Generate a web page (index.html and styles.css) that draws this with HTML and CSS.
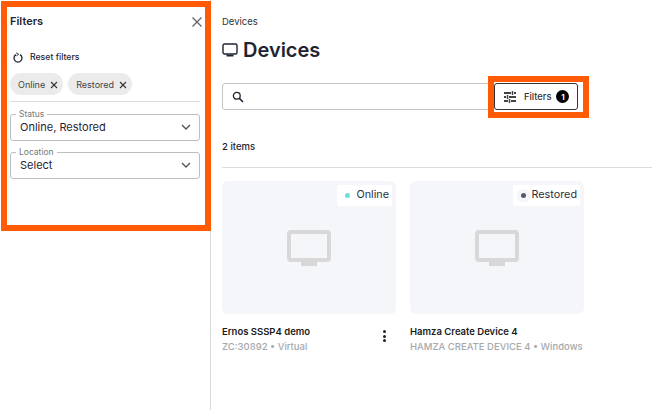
FILE: index.html
```html
<!DOCTYPE html>
<html lang="en">
<head>
  <meta charset="UTF-8">
  <meta name="viewport" content="width=device-width, initial-scale=1.0">
  <title>Devices</title>
  <link rel="stylesheet" href="styles.css">
</head>
<body>

  <div class="page">
    <aside class="sidebar">
      <div class="filters-panel">
        <div class="panel-head">
          <span class="panel-title">Filters</span>
          <svg class="panel-close" width="10" height="10" viewBox="0 0 10 10"><path d="M.5.5l9 9M9.500.5l-9 9" stroke="#5f6368" stroke-width="1.3" fill="none"/></svg>
        </div>
        <div class="reset-row">
          <svg width="10" height="11" viewBox="0 0 10 11"><path d="M3 2.600a4 4 0 1 0 4 0" stroke="#1f2430" stroke-width="1.3" fill="none"/><path d="M3.200.8l2.300 1.500-2 1.500" stroke="#1f2430" stroke-width="1" fill="none"/></svg>
          <span>Reset filters</span>
        </div>
        <div class="chips">
          <div class="chip">Online <svg class="chip-x" width="8" height="8" viewBox="0 0 8 8"><path d="M1 1l6 6M7 1L1 7" stroke="#333" stroke-width="1.1"/></svg></div>
          <div class="chip">Restored <svg class="chip-x" width="8" height="8" viewBox="0 0 8 8"><path d="M1 1l6 6M7 1L1 7" stroke="#333" stroke-width="1.1"/></svg></div>
        </div>
        <fieldset class="select-box">
          <legend>Status</legend>
          <span>Online, Restored</span>
          <svg width="10" height="6" viewBox="0 0 10 6"><path d="M1 1l4 4 4-4" stroke="#555" stroke-width="1.4" fill="none"/></svg>
        </fieldset>
        <fieldset class="select-box">
          <legend>Location</legend>
          <span>Select</span>
          <svg width="10" height="6" viewBox="0 0 10 6"><path d="M1 1l4 4 4-4" stroke="#555" stroke-width="1.4" fill="none"/></svg>
        </fieldset>
      </div>
    </aside>

    <main class="content">
      <div class="crumb">Devices</div>
      <h1 class="title">
        <svg width="16" height="14" viewBox="0 0 16 14"><rect x="1" y="1" width="14" height="10" rx="1.500" stroke="#1f2430" stroke-width="1.400" fill="none"/><path d="M4.500 12.600h7" stroke="#1f2430" stroke-width="1.800"/></svg>
        Devices
      </h1>

      <div class="toolbar">
        <div class="search">
          <svg width="12" height="12" viewBox="0 0 12 12"><circle cx="4.800" cy="4.800" r="3.400" stroke="#1f2430" stroke-width="1.300" fill="none"/><path d="M7.400 7.400l3.600 3.600" stroke="#1f2430" stroke-width="1.500"/></svg>
        </div>
        <div class="filter-mark">
          <button class="filter-btn">
            <svg width="12" height="12" viewBox="0 0 12 12"><path d="M0 2h7M10 2h2M0 6h2M5 6h7M0 10h4M7 10h5" stroke="#444" stroke-width="2"/><path d="M8.500 0v4M3.500 4v4M5.500 8v4" stroke="#444" stroke-width="1.500"/></svg>
            <span>Filters</span>
            <b class="count">1</b>
          </button>
        </div>
      </div>

      <div class="items">2 items</div>

      <div class="cards">
        <div class="card">
          <div class="thumb">
            <div class="status"><i class="dot dot-online"></i>Online</div>
            <svg width="44" height="36" viewBox="0 0 44 36"><rect x="2" y="2" width="40" height="28" rx="2" stroke="#d8d8d8" stroke-width="4" fill="none"/><rect x="14" y="32" width="16" height="4" fill="#d8d8d8"/></svg>
          </div>
          <div class="card-info">
            <div>
              <div class="card-name">Ernos SSSP4 demo</div>
              <div class="card-sub">ZC:30892 • Virtual</div>
            </div>
            <div class="more"><i></i><i></i><i></i></div>
          </div>
        </div>
        <div class="card">
          <div class="thumb">
            <div class="status"><i class="dot dot-restored"></i>Restored</div>
            <svg width="44" height="36" viewBox="0 0 44 36"><rect x="2" y="2" width="40" height="28" rx="2" stroke="#d8d8d8" stroke-width="4" fill="none"/><rect x="14" y="32" width="16" height="4" fill="#d8d8d8"/></svg>
          </div>
          <div class="card-info">
            <div>
              <div class="card-name">Hamza Create Device 4</div>
              <div class="card-sub">HAMZA CREATE DEVICE 4 • Windows</div>
            </div>
          </div>
        </div>
      </div>
    </main>
  </div>

</body>
</html>
```

FILE: styles.css
```css
* {
  box-sizing: border-box;
}
html, body {
  margin: 0;
  padding: 0;
  height: 100%;
  overflow: hidden;
}
body {
  font-family: Inter, "Noto Sans", sans-serif;
  background-color: #ffffff;
  color: #1f2430;
}
.page {
  display: flex;
  height: 410px;
}

/* left filter panel */
.sidebar {
  width: 211px;
  flex-shrink: 0;
  padding: 1px 0 0 1px;
  border-right: 1px solid #d9d9d9;
}
.filters-panel {
  width: 210px;
  height: 230px;
  border: 6px solid #ff5a05;
  padding: 7px 5px 0 3px;
  background-color: #ffffff;
}
.panel-head {
  display: flex;
  justify-content: space-between;
  align-items: center;
  height: 14px;
}
.panel-title {
  font-size: 11px;
  font-weight: 600;
}
.panel-close {
  margin-right: -2px;
  margin-top: 2px;
}
.reset-row {
  display: flex;
  align-items: center;
  gap: 7px;
  margin-top: 22px;
  padding-left: 3px;
  font-size: 8.700px;
  font-weight: 500;
  height: 14px;
}
.chips {
  display: flex;
  gap: 5px;
  margin-top: 9px;
  padding-bottom: 6px;
  border-bottom: 1px solid #dddddd;
}
.chip {
  display: flex;
  align-items: center;
  gap: 5px;
  height: 22px;
  padding: 0 5px 0 8px;
  border-radius: 11px;
  background-color: #ebebeb;
  font-size: 9px;
  color: #444444;
}
.chip-x {
  margin-top: 1px;
}
.select-box {
  display: flex;
  justify-content: space-between;
  align-items: center;
  height: 32px;
  margin: 0;
  padding: 0 8px 5px 9px;
  border: 1px solid #bdbdbd;
  border-radius: 3px;
  font-size: 11px;
  min-width: 0;
}
.select-box legend {
  padding: 0 3px;
  margin-left: -4px;
  font-size: 8.500px;
  line-height: 10px;
  color: #777777;
}
.chips + .select-box {
  margin-top: 7px;
}
.select-box + .select-box {
  margin-top: 6px;
}

/* main area */
.content {
  flex: 1;
  min-width: 0;
  padding: 15px 0 0 11px;
}
.crumb {
  font-size: 9.500px;
  line-height: 13px;
  color: #333333;
}
.title {
  display: flex;
  align-items: center;
  gap: 5px;
  margin: 10px 0 0 0;
  font-size: 20px;
  line-height: 24px;
  font-weight: 600;
}
.toolbar {
  display: flex;
  align-items: flex-start;
  margin-top: 14px;
  height: 42px;
  padding-right: 63px;
}
.search {
  flex: 1;
  display: flex;
  align-items: center;
  height: 27px;
  margin: 7px -2px 0 0;
  padding-left: 9px;
  border: 1px solid #c4c4c4;
  border-radius: 3px;
}
.filter-mark {
  border: 6px solid #ff5a05;
  height: 42px;
  width: 101px;
  padding: 1px 5px 0 0;
  background-color: #ffffff;
  position: relative;
}
.filter-btn {
  display: flex;
  align-items: center;
  width: 84px;
  height: 27px;
  padding: 0 6px 0 9px;
  border: 1px solid #333333;
  border-radius: 3px;
  background-color: #ffffff;
  font-family: inherit;
  font-size: 9.300px;
  font-weight: 500;
  color: #333333;
}
.filter-btn span {
  margin-left: 8px;
}
.count {
  display: flex;
  align-items: center;
  justify-content: center;
  width: 13px;
  height: 13px;
  margin-left: 5px;
  border-radius: 50%;
  background-color: #000000;
  color: #ffffff;
  font-size: 8px;
}
.items {
  margin-top: 22px;
  padding-bottom: 14px;
  border-bottom: 1px solid #dddddd;
  font-size: 9.500px;
  font-weight: 500;
  line-height: 13px;
}
.cards {
  display: flex;
  gap: 14px;
  margin-top: 13px;
}
.card {
  width: 174px;
}
.thumb {
  position: relative;
  display: flex;
  align-items: center;
  justify-content: center;
  height: 133px;
  border-radius: 6px;
  background-color: #f5f6fa;
}
.status {
  position: absolute;
  top: 4px;
  right: 4px;
  display: flex;
  align-items: center;
  gap: 6px;
  height: 21px;
  padding: 0 3px 2px 8px;
  border-radius: 3px;
  background-color: #ffffff;
  font-size: 10.800px;
  color: #2b3040;
}
.dot {
  width: 5px;
  height: 5px;
  margin-top: 2px;
  border-radius: 50%;
}
.dot-online {
  background-color: #6fe0d8;
}
.dot-restored {
  background-color: #55586e;
  box-shadow: 0 0 0 4px #f5f6fa;
}
.card-info {
  display: flex;
  justify-content: space-between;
  align-items: flex-start;
  margin-top: 11px;
}
.card-name {
  font-size: 9.500px;
  font-weight: 600;
  line-height: 14px;
  color: #1a1a1a;
}
.card-sub {
  font-size: 9.500px;
  font-weight: 500;
  line-height: 15px;
  color: #a6a8ad;
  white-space: nowrap;
}
.more {
  display: flex;
  flex-direction: column;
  gap: 1.500px;
  margin: 5px 10px 0 0;
}
.more i {
  display: block;
  width: 3px;
  height: 3px;
  border-radius: 50%;
  background-color: #222222;
}
```
